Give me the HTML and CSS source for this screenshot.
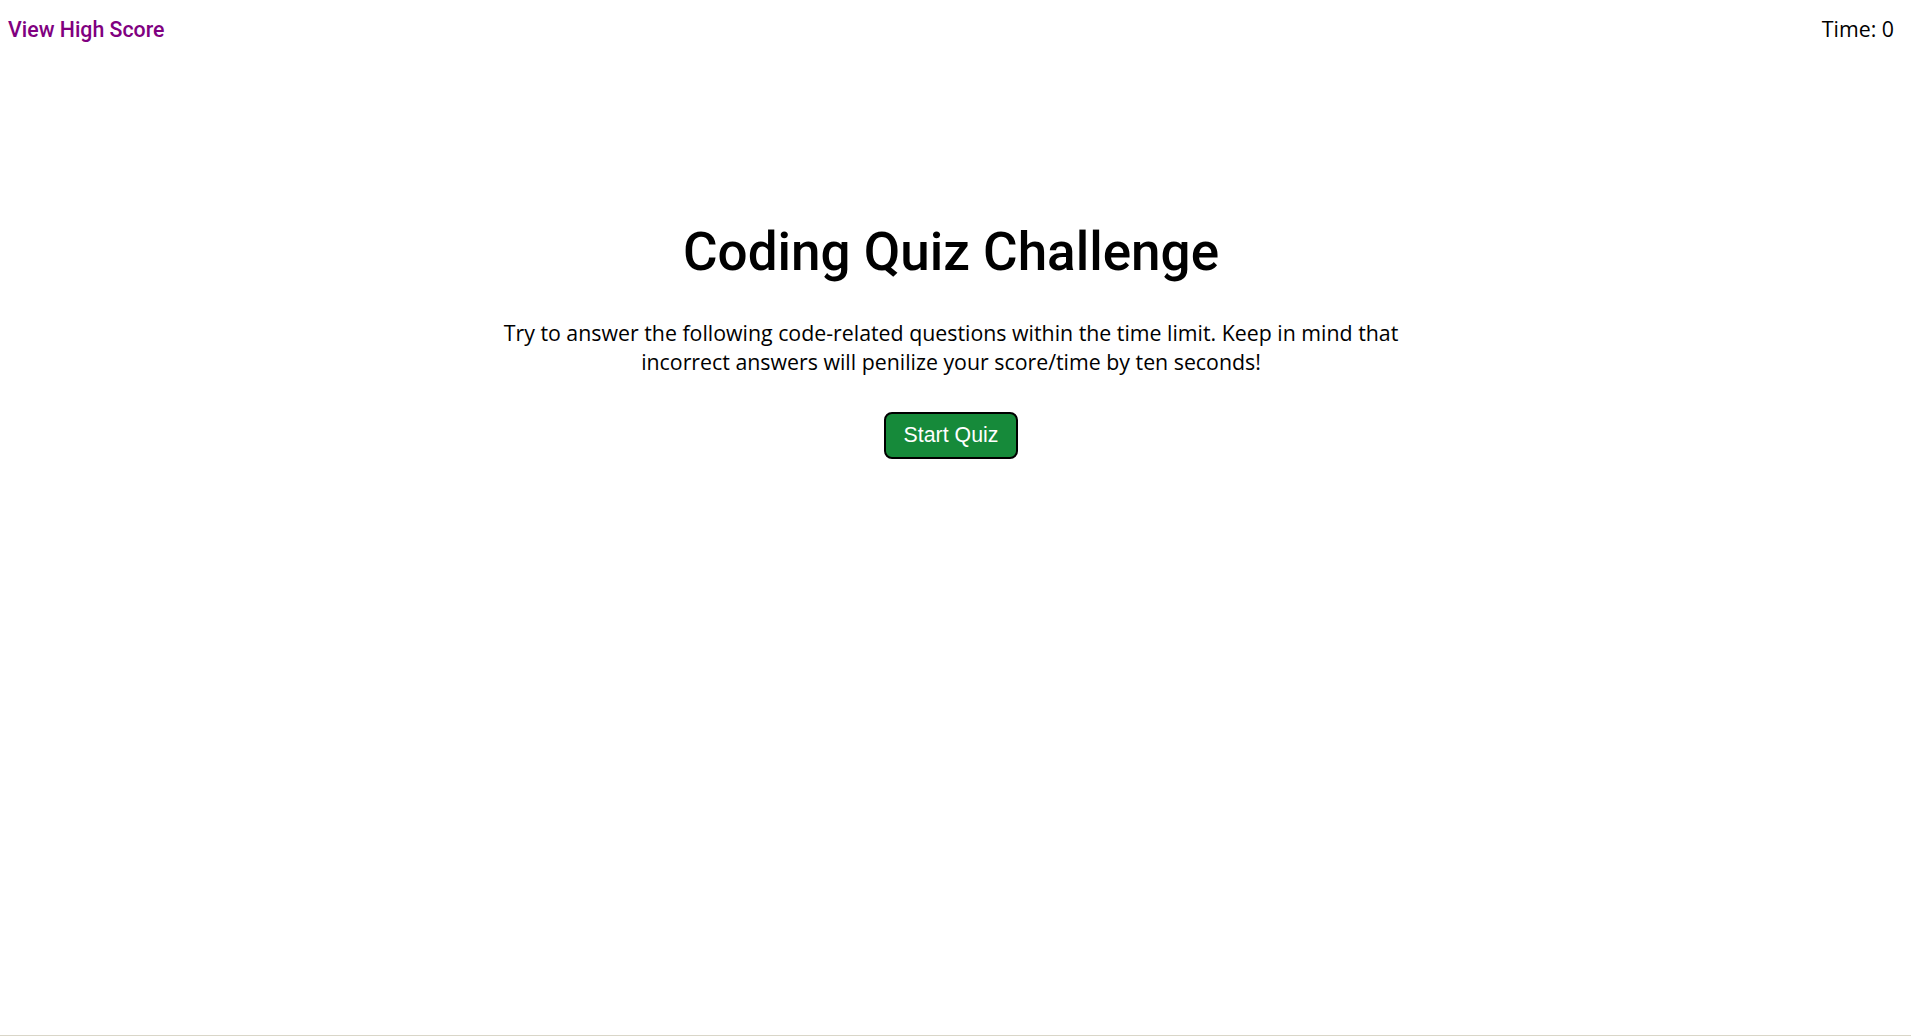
FILE: index.html
```html
<!DOCTYPE html>
<html lang="en">
<head>
<meta charset="utf-8">
<title>Coding Quiz Challenge</title>
<link rel="stylesheet" href="styles.css">
</head>
<body>
<header class="top-bar">
  <a class="high-score" href="#">View High Score</a>
  <div class="timer">Time: 0</div>
</header>
<main class="intro">
  <h1 class="title">Coding Quiz Challenge</h1>
  <p class="description">Try to answer the following code-related questions within the time limit. Keep in mind that incorrect answers will penilize your score/time by ten seconds!</p>
  <button class="start-btn" type="button">Start Quiz</button>
</main>
</body>
</html>
```
FILE: styles.css
```css
html, body {
  height: 100%;
}
body {
  margin: 0;
  padding: 0 17px 0 8px;
  background: #ffffff;
  color: #000000;
  font-family: "Open Sans", sans-serif;
  box-sizing: border-box;
  border-bottom: 1px solid #d9d6c8;
}
.top-bar {
  display: flex;
  justify-content: space-between;
  align-items: baseline;
  padding-top: 14px;
}
.high-score {
  font-family: Roboto, sans-serif;
  font-weight: 500;
  font-size: 21.33px;
  color: #800080;
  text-decoration: none;
}
.timer {
  font-family: "Open Sans", sans-serif;
  font-size: 21.33px;
}
.intro {
  display: flex;
  flex-direction: column;
  align-items: center;
  text-align: center;
  padding-top: 178px;
}
.title {
  font-family: Roboto, sans-serif;
  font-weight: 500;
  font-size: 53px;
  margin: 0;
}
.description {
  font-family: "Open Sans", sans-serif;
  font-size: 21.33px;
  width: 900px;
  margin: 35px 0 0;
}
.start-btn {
  margin-top: 36px;
  font-family: "Liberation Sans", Arial, sans-serif;
  font-size: 21.33px;
  color: #ffffff;
  background: #168a3a;
  border: 2px solid #000000;
  border-radius: 8px;
  padding: 9px 18px;
}
```
